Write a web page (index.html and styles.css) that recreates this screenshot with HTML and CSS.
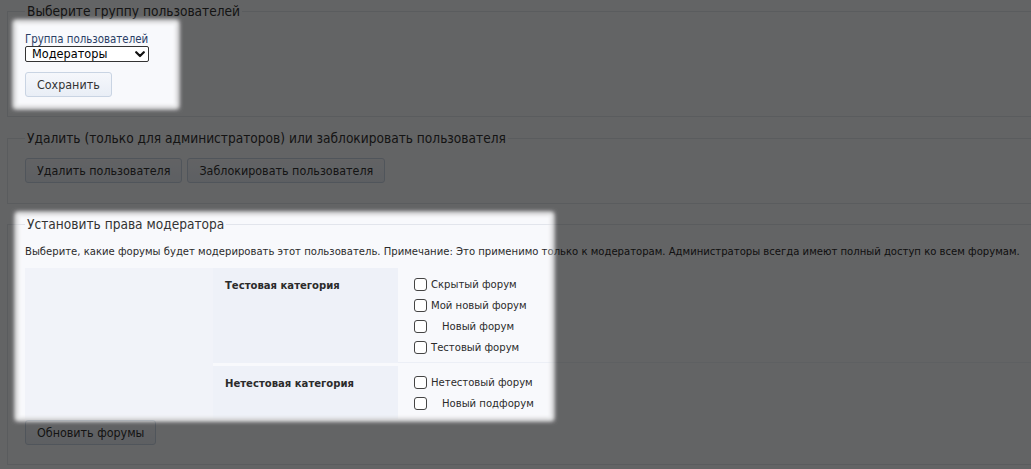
FILE: index.html
```html
<!DOCTYPE html>
<html lang="ru">
<head>
<meta charset="utf-8">
<title>Пользователь</title>
<link rel="stylesheet" href="styles.css">
</head>
<body>
<div class="page">
  <fieldset class="box box-group">
    <legend>Выберите группу пользователей</legend>
    <label class="field-label" for="grp">Группа пользователей</label>
    <span class="select-wrap">
      <select id="grp" class="select"><option>Модераторы</option></select>
      <svg class="chev" width="10" height="7" viewBox="0 0 10 7"><path d="M1.2 1.2 L5 5 L8.8 1.2" fill="none" stroke="#111" stroke-width="2.2" stroke-linecap="round" stroke-linejoin="round"/></svg>
    </span>
    <div class="actions"><button class="btn">Сохранить</button></div>
  </fieldset>

  <fieldset class="box box-del">
    <legend>Удалить (только для администраторов) или заблокировать пользователя</legend>
    <div class="actions row-btns">
      <button class="btn">Удалить пользователя</button>
      <button class="btn">Заблокировать пользователя</button>
    </div>
  </fieldset>

  <fieldset class="box">
    <legend>Установить права модератора</legend>
    <p class="note">Выберите, какие форумы будет модерировать этот пользователь. Примечание: Это применимо только к модераторам. Администраторы всегда имеют полный доступ ко всем форумам.</p>
    <div class="perm-grid">
      <div class="cell-empty"></div>
      <div class="cell-cat">Тестовая категория</div>
      <div class="cell-list">
        <label class="item"><input type="checkbox" class="cb"><span>Скрытый форум</span></label>
        <label class="item"><input type="checkbox" class="cb"><span>Мой новый форум</span></label>
        <label class="item"><input type="checkbox" class="cb"><span class="sub">Новый форум</span></label>
        <label class="item"><input type="checkbox" class="cb"><span>Тестовый форум</span></label>
      </div>
      <div class="cell-cat">Нетестовая категория</div>
      <div class="cell-list last">
        <label class="item"><input type="checkbox" class="cb"><span>Нетестовый форум</span></label>
        <label class="item"><input type="checkbox" class="cb"><span class="sub">Новый подфорум</span></label>
      </div>
    </div>
    <div class="actions tight"><button class="btn">Обновить форумы</button></div>
  </fieldset>
</div>

<svg class="spotlight" width="1031" height="469" viewBox="0 0 1031 469" aria-hidden="true">
  <defs>
    <filter id="soft" x="-20%" y="-20%" width="140%" height="140%"><feGaussianBlur stdDeviation="2.5"/></filter>
    <filter id="glow" x="-20%" y="-20%" width="140%" height="140%"><feGaussianBlur stdDeviation="2"/></filter>
    <mask id="holes">
      <rect width="1031" height="469" fill="#fff"/>
      <g filter="url(#soft)">
        <rect x="14" y="21" width="164" height="87" fill="#000"/>
        <rect x="16" y="213" width="537" height="207" fill="#000"/>
      </g>
    </mask>
  </defs>
  <rect width="1031" height="469" fill="#000" fill-opacity="0.6" mask="url(#holes)"/>
  <g filter="url(#glow)" fill="none" stroke="#fff" stroke-width="3" stroke-opacity="0.8">
    <rect x="15" y="22" width="162" height="85"/>
    <rect x="17" y="214" width="535" height="205"/>
  </g>
</svg>
</body>
</html>
```

FILE: styles.css
```css
html, body {
  margin: 0;
  padding: 0;
}
body {
  background: #f8f9fc;
  color: #2b2b2b;
  font-family: "DejaVu Sans Condensed", "DejaVu Sans", sans-serif;
  font-size: 11.2px;
  width: 1031px;
  height: 469px;
  overflow: hidden;
  position: relative;
}
.page {
  width: 1100px;
  padding: 3px 0 0 7px;
}
.box {
  margin: 0 0 12px 0;
  padding: 13px 17px 19px 17px;
  border: 1px solid #e2e5ec;
  min-width: 0;
}
.box-group {
  margin-bottom: 13px;
}
.box-del {
  padding-top: 12px;
  padding-bottom: 20px;
}
.box legend {
  padding: 0 2px;
  font-size: 13.6px;
  line-height: 16px;
  color: #333;
}
.field-label {
  display: block;
  line-height: 14px;
  color: #2a3e66;
  font-size: 11.4px;
}
.select-wrap {
  position: relative;
  display: inline-block;
  vertical-align: top;
}
.select {
  -webkit-appearance: none;
  appearance: none;
  width: 124px;
  height: 16px;
  margin: 0;
  padding: 0 0 0 6px;
  border: 1px solid #333;
  border-radius: 2px;
  background: #fff;
  color: #000;
  font-family: inherit;
  font-size: 12.6px;
  line-height: 14px;
}
.chev {
  position: absolute;
  right: 4px;
  top: 5px;
  pointer-events: none;
}
.actions {
  margin-top: 10px;
  display: flex;
  gap: 5px;
}
.actions.row-btns {
  margin-top: 0;
}
.actions.tight {
  margin-top: 1px;
}
.btn {
  height: 25px;
  padding: 0 11px;
  margin: 0;
  border: 1px solid #c9d4e3;
  border-radius: 3px;
  background: linear-gradient(#f5f7fb, #e9eef6);
  color: #333;
  font-family: inherit;
  font-size: 12.4px;
}
.note {
  margin: 0;
  line-height: 14px;
  white-space: nowrap;
}
.perm-grid {
  margin-top: 9px;
  display: grid;
  grid-template-columns: 188px 185px 1fr;
  grid-template-rows: auto auto;
  row-gap: 3px;
  background: #f8f9fc;
}
.cell-empty {
  grid-row: 1 / span 2;
  background: #f1f3f9;
}
.cell-cat {
  grid-column: 2;
  background: #eef1f8;
  padding: 11px 12px 0 12px;
  font-weight: bold;
  line-height: 14px;
}
.cell-list {
  grid-column: 3;
  background: #f8f9fc;
  border-bottom: 1px solid #eceff6;
  padding: 6px 0 4px 16px;
}
.cell-list.last {
  border-bottom: none;
  padding-bottom: 5px;
}
.item {
  display: flex;
  align-items: center;
  height: 21px;
  line-height: 14px;
}
.cb {
  -webkit-appearance: none;
  appearance: none;
  width: 13px;
  height: 13px;
  margin: 0 4px 0 0;
  border: 1px solid #444;
  border-radius: 3px;
  background: #fff;
  flex: none;
}
.sub {
  padding-left: 11px;
}
.spotlight {
  position: absolute;
  left: 0;
  top: 0;
  pointer-events: none;
}
```
